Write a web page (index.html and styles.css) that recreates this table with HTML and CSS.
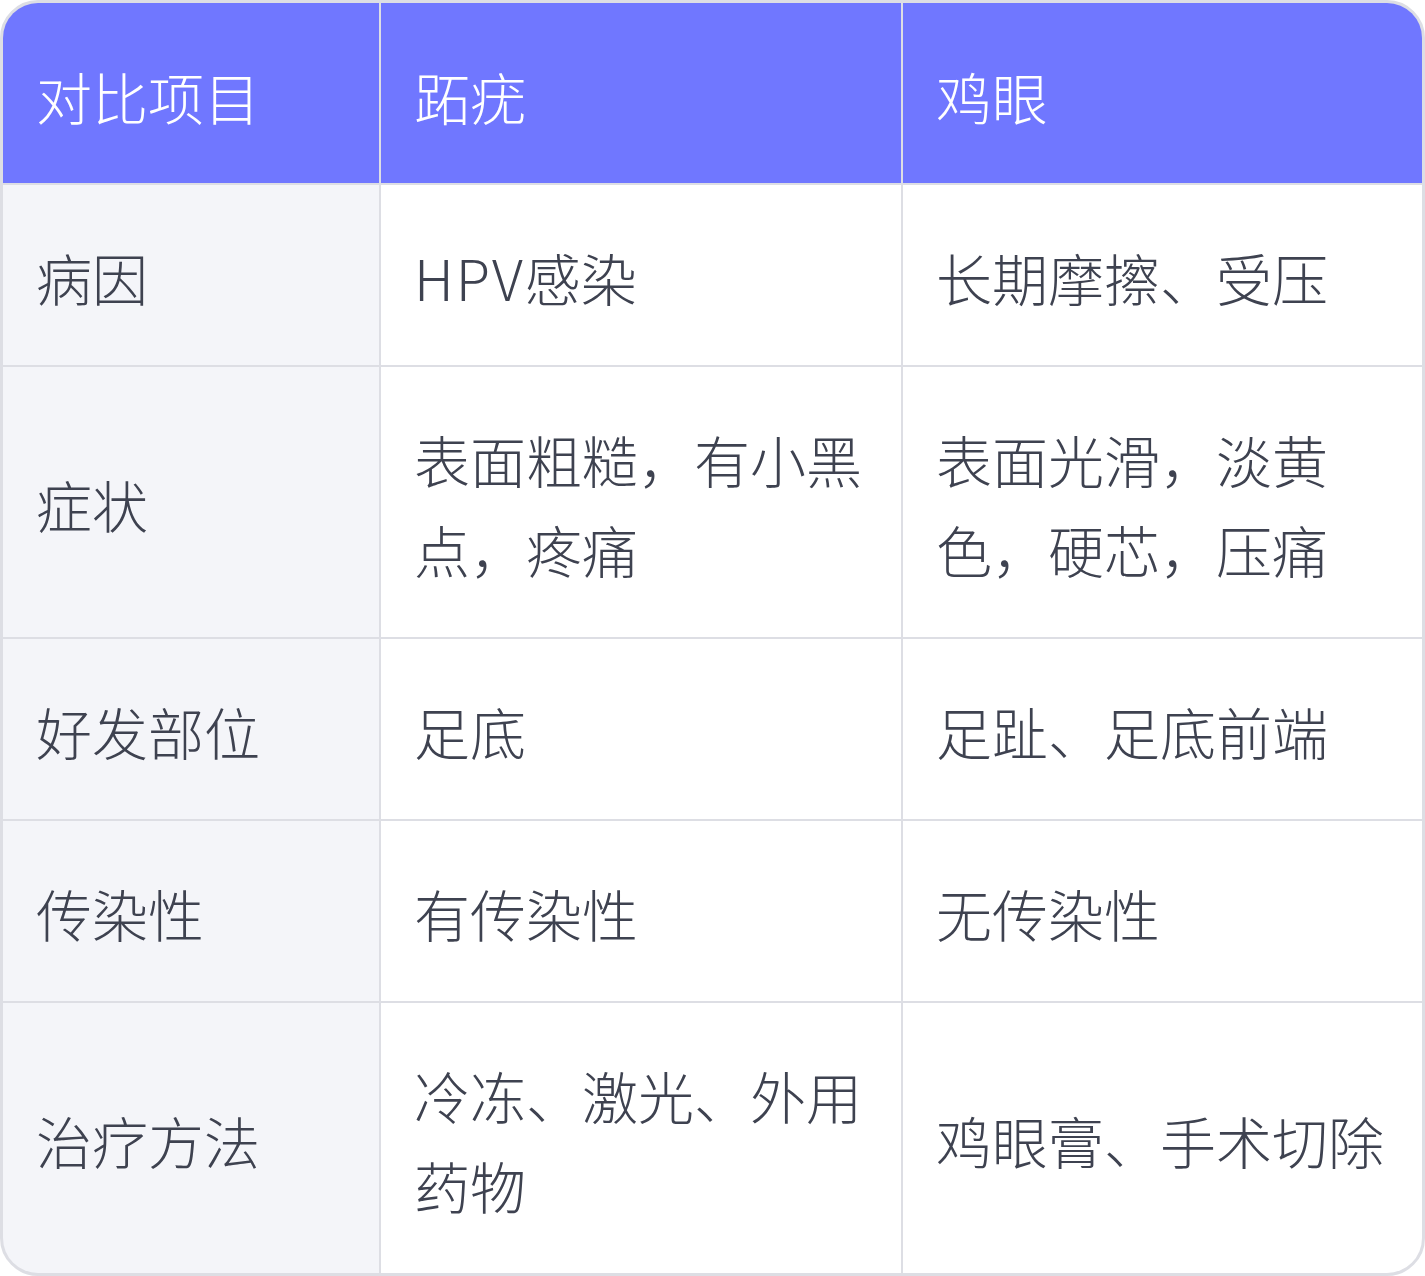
FILE: index.html
```html
<!DOCTYPE html>
<html lang="zh-CN">
<head>
<meta charset="utf-8">
<link rel="stylesheet" href="styles.css">
</head>
<body>
<div class="table">
  <div class="cell head">对比项目</div>
  <div class="cell head">跖疣</div>
  <div class="cell head">鸡眼</div>

  <div class="cell label">病因</div>
  <div class="cell"><span class="latin">HPV</span>感染</div>
  <div class="cell">长期摩擦、受压</div>

  <div class="cell label">症状</div>
  <div class="cell">表面粗糙，有小黑点，疼痛</div>
  <div class="cell">表面光滑，淡黄色，硬芯，压痛</div>

  <div class="cell label">好发部位</div>
  <div class="cell">足底</div>
  <div class="cell">足趾、足底前端</div>

  <div class="cell label">传染性</div>
  <div class="cell">有传染性</div>
  <div class="cell">无传染性</div>

  <div class="cell label">治疗方法</div>
  <div class="cell">冷冻、激光、外用药物</div>
  <div class="cell">鸡眼膏、手术切除</div>
</div>
</body>
</html>
```
FILE: styles.css
```css
html, body {
  margin: 0;
  padding: 0;
  background: #ffffff;
}
.table {
  box-sizing: border-box;
  width: 1425px;
  height: 1276px;
  border: 3px solid #dddee4;
  border-radius: 38px;
  overflow: hidden;
  display: grid;
  grid-template-columns: 376px 520px 1fr;
  grid-template-rows: 180px 180px 270px 180px 180px 1fr;
  gap: 2px;
  background: #dddee4;
  font-family: "Noto Sans CJK SC", "Noto Sans", sans-serif;
  font-weight: 300;
  font-size: 56px;
  line-height: 90px;
  color: #3e4250;
}
.cell {
  background: #ffffff;
  display: flex;
  align-items: center;
  padding: 3px 30px 0 33px;
}
.cell.label {
  background: #f4f5f9;
}
.cell.head {
  background: #7077ff;
  color: #ffffff;
  padding-top: 6px;
}
.latin {
  letter-spacing: 2px;
}
```
